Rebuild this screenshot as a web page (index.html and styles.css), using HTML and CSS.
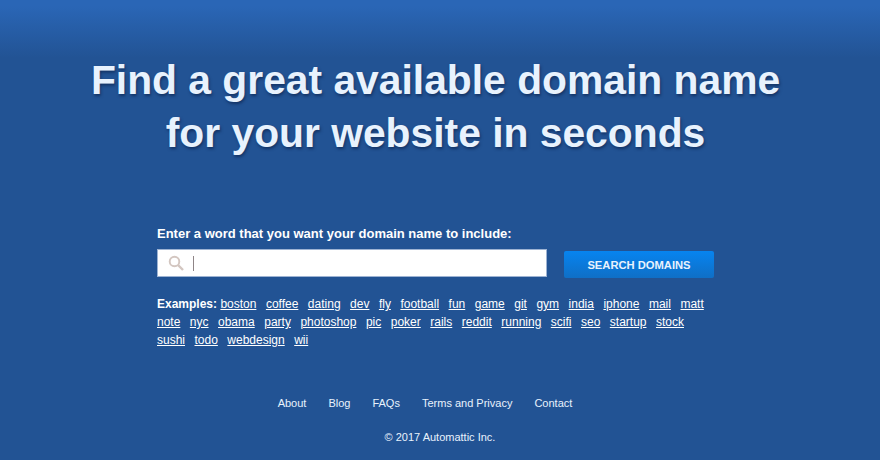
FILE: index.html
```html
<!DOCTYPE html>
<html lang="en">
<head>
    <meta charset="UTF-8">
    <title>Find a great available domain name</title>
    <link rel="stylesheet" href="styles.css">
</head>
<body>
    <h1 class="headline">Find a great available domain name<br>for your website in seconds</h1>

    <form class="search">
        <label class="search-label" for="query">Enter a word that you want your domain name to include:</label>
        <div class="search-row">
            <div class="search-box">
                <svg class="search-icon" width="16" height="16" viewBox="0 0 16 16" fill="none">
                    <circle cx="6.5" cy="6.5" r="4.8" stroke="#d3c6c0" stroke-width="1.9"/>
                    <path d="M10 10l5 5" stroke="#d3c6c0" stroke-width="2.4"/>
                </svg>
                <span class="caret"></span>
            </div>
            <button class="search-button" type="button">SEARCH DOMAINS</button>
        </div>
        <p class="examples">
            <b>Examples:</b>
            <a href="#">boston</a>
            <a href="#">coffee</a>
            <a href="#">dating</a>
            <a href="#">dev</a>
            <a href="#">fly</a>
            <a href="#">football</a>
            <a href="#">fun</a>
            <a href="#">game</a>
            <a href="#">git</a>
            <a href="#">gym</a>
            <a href="#">india</a>
            <a href="#">iphone</a>
            <a href="#">mail</a>
            <a href="#">matt</a>
            <a href="#">note</a>
            <a href="#">nyc</a>
            <a href="#">obama</a>
            <a href="#">party</a>
            <a href="#">photoshop</a>
            <a href="#">pic</a>
            <a href="#">poker</a>
            <a href="#">rails</a>
            <a href="#">reddit</a>
            <a href="#">running</a>
            <a href="#">scifi</a>
            <a href="#">seo</a>
            <a href="#">startup</a>
            <a href="#">stock</a>
            <a href="#">sushi</a>
            <a href="#">todo</a>
            <a href="#">webdesign</a>
            <a href="#">wii</a>
        </p>
    </form>

    <div class="footer">
        <nav class="footer-links">
            <a href="#">About</a>
            <a href="#">Blog</a>
            <a href="#">FAQs</a>
            <a href="#">Terms and Privacy</a>
            <a href="#">Contact</a>
        </nav>
        <p class="copyright">© 2017 Automattic Inc.</p>
    </div>
</body>
</html>
```

FILE: styles.css
```css
html, body {
    height: 100%;
}
body {
    margin: 0;
    overflow: hidden;
    font-family: "Liberation Sans", Arial, sans-serif;
    color: white;
    background: linear-gradient(#2a66b6 0, #2a66b6 6px, #225394 58px) no-repeat #225394;
}
.headline {
    margin: 0;
    padding: 54px 9px 0 0;
    text-align: center;
    font-size: 40.8px;
    line-height: 53px;
    font-weight: bold;
    color: #e8f2fd;
    text-shadow: 1px 2px 3px rgba(10, 30, 70, 0.6);
}
.search {
    width: 566px;
    margin: 65px 0 0 157px;
}
.search-label {
    display: block;
    font-size: 13px;
    line-height: 18px;
    font-weight: bold;
}
.search-row {
    display: flex;
    align-items: flex-start;
    margin-top: 6px;
}
.search-box {
    display: flex;
    align-items: center;
    box-sizing: border-box;
    width: 390px;
    height: 28px;
    padding-left: 10px;
    background-color: white;
    border: 1px solid #9db3d3;
}
.caret {
    width: 1px;
    height: 15px;
    margin-left: 9px;
    background-color: #8f8587;
}
.search-button {
    width: 150px;
    height: 27px;
    margin: 2px 0 0 17px;
    padding: 0;
    font-family: inherit;
    font-size: 11.2px;
    font-weight: bold;
    color: #e8f2fd;
    background: linear-gradient(#0784f0, #0f6fc6);
    border: none;
    border-radius: 2px;
}
.examples {
    margin: 17px 0 0;
    font-size: 12px;
    line-height: 18px;
}
.examples a {
    color: white;
    margin-right: 6.15px;
}
.footer {
    margin-top: 47px;
    text-align: center;
    font-size: 11px;
    line-height: 14px;
}
.footer-links {
    display: flex;
    justify-content: center;
    gap: 22px;
    padding-right: 30px;
}
.footer-links a {
    color: #e8f2fd;
    text-decoration: none;
}
.copyright {
    margin: 20px 0 0;
    color: #e8f2fd;
}
```
